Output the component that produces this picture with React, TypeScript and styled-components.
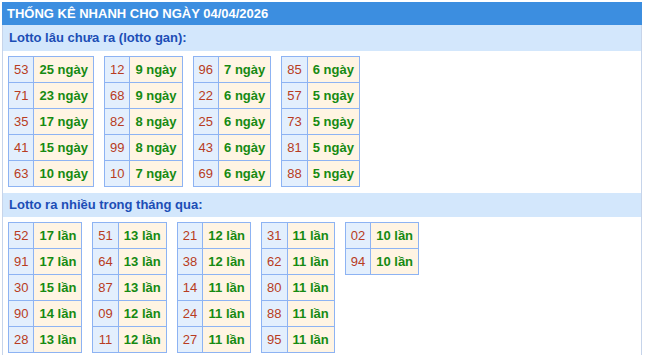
import styled, { createGlobalStyle } from "styled-components";

const GlobalStyle = createGlobalStyle`
    body {
        margin: 0;
        background: #ffffff;
        font-family: "Liberation Sans", Arial, sans-serif;
    }
`;

const StyledBox = styled.div`
    width: 638px;
    margin: 2px;
    border-left: 1px solid #c6d4ea;
    border-right: 1px solid #c6d4ea;
`;

const StyledTitle = styled.div`
    height: 23px;
    line-height: 23px;
    margin: 0 -1px;
    padding-left: 5px;
    background-color: #3c8ee0;
    color: #ffffff;
    font-size: 13px;
    font-weight: bold;
`;

const StyledSection = styled.div<{ $height: number }>`
    height: ${(p) => p.$height}px;
    line-height: ${(p) => p.$height}px;
    padding-left: 6px;
    background-color: #d3e7fc;
    color: #1c4eb6;
    font-size: 13px;
    font-weight: bold;
`;

const StyledGroup = styled.div`
    display: flex;
    flex-wrap: wrap;
    align-items: flex-start;
    gap: 10px;
    padding: 5px 5px 6px;
`;

const StyledTable = styled.table`
    border-collapse: collapse;
    font-size: 13px;

    td {
        height: 25px;
        padding: 0 5px;
        border: 1px solid #8db3f3;
        text-align: center;
        white-space: nowrap;
    }
    td.num {
        background-color: #e3effd;
        color: #b83c22;
    }
    td.val {
        background-color: #fff4e3;
        color: #168a12;
        font-weight: bold;
    }
`;

type Item = [string, number];

const gan: Item[][] = [
    [["53", 25], ["71", 23], ["35", 17], ["41", 15], ["63", 10]],
    [["12", 9], ["68", 9], ["82", 8], ["99", 8], ["10", 7]],
    [["96", 7], ["22", 6], ["25", 6], ["43", 6], ["69", 6]],
    [["85", 6], ["57", 5], ["73", 5], ["81", 5], ["88", 5]],
];

const nhieu: Item[][] = [
    [["52", 17], ["91", 17], ["30", 15], ["90", 14], ["28", 13]],
    [["51", 13], ["64", 13], ["87", 13], ["09", 12], ["11", 12]],
    [["21", 12], ["38", 12], ["14", 11], ["24", 11], ["27", 11]],
    [["31", 11], ["62", 11], ["80", 11], ["88", 11], ["95", 11]],
    [["02", 10], ["94", 10]],
];

function LottoTable({ rows, unit }: { rows: Item[]; unit: string }) {
    return (
        <StyledTable>
            <tbody>
                {rows.map(([num, count]) => (
                    <tr key={num}>
                        <td className="num">{num}</td>
                        <td className="val">{count} {unit}</td>
                    </tr>
                ))}
            </tbody>
        </StyledTable>
    );
}

function App() {
    return (
        <>
            <GlobalStyle />
            <StyledBox>
                <StyledTitle>THỐNG KÊ NHANH CHO NGÀY 04/04/2026</StyledTitle>
                <StyledSection $height={26}>Lotto lâu chưa ra (lotto gan):</StyledSection>
                <StyledGroup>
                    {gan.map((rows, i) => (
                        <LottoTable key={i} rows={rows} unit="ngày" />
                    ))}
                </StyledGroup>
                <StyledSection $height={24}>Lotto ra nhiều trong tháng qua:</StyledSection>
                <StyledGroup>
                    {nhieu.map((rows, i) => (
                        <LottoTable key={i} rows={rows} unit="lần" />
                    ))}
                </StyledGroup>
            </StyledBox>
        </>
    );
}

export default App;
